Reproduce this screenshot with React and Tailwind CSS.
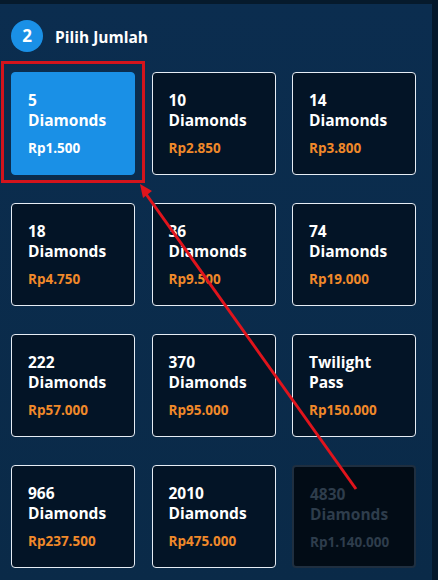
import React from "react";

const items = [
  { amount: "5", unit: "Diamonds", price: "Rp1.500", selected: true },
  { amount: "10", unit: "Diamonds", price: "Rp2.850" },
  { amount: "14", unit: "Diamonds", price: "Rp3.800" },
  { amount: "18", unit: "Diamonds", price: "Rp4.750" },
  { amount: "36", unit: "Diamonds", price: "Rp9.500" },
  { amount: "74", unit: "Diamonds", price: "Rp19.000" },
  { amount: "222", unit: "Diamonds", price: "Rp57.000" },
  { amount: "370", unit: "Diamonds", price: "Rp95.000" },
  { amount: "Twilight", unit: "Pass", price: "Rp150.000" },
  { amount: "966", unit: "Diamonds", price: "Rp237.500" },
  { amount: "2010", unit: "Diamonds", price: "Rp475.000" },
  { amount: "4830", unit: "Diamonds", price: "Rp1.140.000", disabled: true },
];

const Card = ({ item }) => {
  let box = "bg-[#031426] border border-[#e6edf5] text-white";
  let priceColor = "text-[#f0892a]";
  if (item.selected) {
    box = "bg-[#1a90e6] border border-[#1a90e6] text-white";
    priceColor = "text-white";
  }
  if (item.disabled) {
    box = "bg-[#020c16] border-2 border-[#1f2f40] text-[#2e3d4c]";
    priceColor = "text-[#2e3d4c]";
  }
  return (
    <div className={`h-[103px] rounded-[4px] pl-[16px] pt-[17px] ${box}`}>
      <div className="text-[15.5px] font-bold leading-[20px]">{item.amount}</div>
      <div className="text-[15.5px] font-bold leading-[20px]">{item.unit}</div>
      <div className={`mt-[9px] text-[13.5px] font-bold leading-[19px] ${priceColor}`}>
        {item.price}
      </div>
    </div>
  );
};

export default function App() {
  return (
    <div
      className="relative w-[438px] h-[580px] overflow-hidden bg-[#041a30]"
      style={{ fontFamily: '"Open Sans", "Noto Sans", sans-serif' }}
    >
      <div className="absolute left-0 top-0 w-[438px] h-[4px] bg-[#061a2c]" />
      <div className="flex flex-col mt-[4px] w-[432px] h-[576px] pt-[16px] bg-gradient-to-b from-[#0b2d4f] to-[#0a2a48]">
        <div className="flex items-center h-[32px] pl-[11px]">
          <div className="w-[32px] h-[32px] rounded-full bg-[#1a90e6] flex items-center justify-center text-white text-[17px] font-bold">
            2
          </div>
          <div className="ml-[12px] pt-[3px] text-white text-[15.5px] font-bold">Pilih Jumlah</div>
        </div>
        <div className="grid grid-cols-[124px_124px_124px] gap-x-[16.5px] gap-y-[28px] pl-[11px] pt-[20px]">
          {items.map((item) => (
            <Card key={item.amount} item={item} />
          ))}
        </div>
      </div>
      <div className="absolute left-[432px] top-0 w-[6px] h-[580px] bg-[#04182b]" />

      <div className="absolute left-[1px] top-[61px] w-[144px] h-[122px] border-[3px] border-[#d4141c]" />
      <svg className="absolute left-0 top-0" width="438" height="580" viewBox="0 0 438 580">
        <line x1="356" y1="489" x2="146" y2="194" stroke="#e0141c" strokeWidth="3" />
        <polygon points="140,184 152,191 143,198" fill="#e0141c" />
      </svg>
    </div>
  );
}
